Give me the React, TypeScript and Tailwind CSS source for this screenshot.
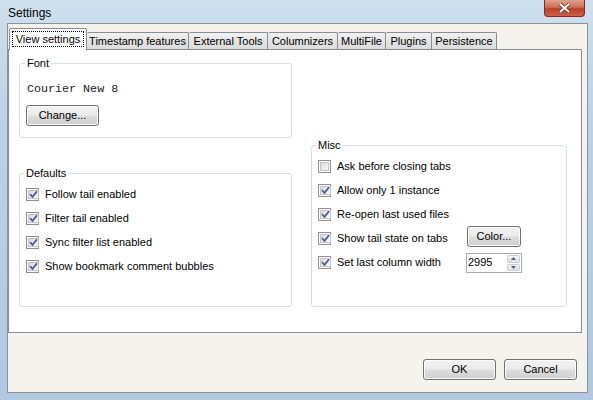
import React from "react";

const btn =
  "h-[21px] rounded-[3px] border border-[#707070] bg-[linear-gradient(to_bottom,#f2f2f2_0%,#ebebeb_48%,#dddddd_52%,#cfcfcf_100%)] text-[11px] text-black shadow-[inset_0_0_0_1px_#fcfcfc]";

function Check({ checked }: { checked: boolean }) {
  return (
    <span className="w-[13px] h-[13px] border border-[#8e8f8f] bg-white p-[1px] shrink-0 flex">
      <span className="flex-1 bg-[linear-gradient(135deg,#dcdcdc,#f8f8f8)] border border-[#c4c4c4] flex items-center justify-center">
        {checked && (
          <svg width="9" height="9" viewBox="0 0 9 9">
            <path d="M1 4.2 L3.5 6.8 L8 1.2" stroke="#4a5f97" strokeWidth="1.8" fill="none" />
          </svg>
        )}
      </span>
    </span>
  );
}

function Row({ label, checked }: { label: string; checked: boolean }) {
  return (
    <div className="flex items-center gap-[6px] h-[13px]">
      <Check checked={checked} />
      <span className="leading-[13px] whitespace-nowrap">{label}</span>
    </div>
  );
}

function Box({ title, className, children }: { title: string; className: string; children?: React.ReactNode }) {
  return (
    <fieldset className={"border border-[#d5dfe5] rounded-[3px] " + className}>
      <legend className="-ml-[2px] px-[2px] leading-[13px]">{title}</legend>
      {children}
    </fieldset>
  );
}

const tabs = ["Timestamp features", "External Tools", "Columnizers", "MultiFile", "Plugins", "Persistence"];
const tabW = [102, 79, 70, 48, 46, 65];

export default function App() {
  return (
    <div
      className="w-[593px] h-[400px] flex flex-col bg-[linear-gradient(to_bottom,#cfe0ee,#bcd2e6_30%,#b0c9e0)] text-black text-[11px]"
      style={{ fontFamily: '"Liberation Sans", Arial, sans-serif' }}
    >
      <div className="h-[23px] flex items-start justify-between pl-[8px] pr-[8px]">
        <span className="text-[12px] mt-[6px] leading-[14px]">Settings</span>
        <span className="w-[41px] h-[17px] rounded-b-[4px] border border-t-0 border-[#7a2e1f] bg-[linear-gradient(to_bottom,#dfa08e,#cf6f57_45%,#bd3f25_55%,#c9634b)] flex items-center justify-center">
          <svg width="13" height="10" viewBox="0 0 13 10">
            <path d="M2 1 L11 9 M11 1 L2 9" stroke="#4a3530" strokeWidth="3.4" />
            <path d="M2 1 L11 9 M11 1 L2 9" stroke="#ffffff" strokeWidth="2" />
          </svg>
        </span>
      </div>
      <div className="flex-1 ml-[7px] mr-[5px] mb-[7px] border border-[#8d9196] bg-[#f4f3ee] flex flex-col">
        <div className="flex items-end h-[25px] pl-[1px]">
          <div className="w-[78px] h-[22px] -mb-[1px] bg-white border border-b-0 border-[#898c95] rounded-t-[2px] relative z-10 flex items-start justify-center pt-[2px]">
            <span className="border border-dotted border-black h-[16px] leading-[14px] w-[72px] text-center whitespace-nowrap">View settings</span>
          </div>
          {tabs.map((t, i) => (
            <div
              key={t}
              style={{ width: tabW[i] }}
              className="h-[17px] border border-b-0 border-l-0 border-[#898c95] rounded-t-[2px] bg-[linear-gradient(to_bottom,#f2f2f2,#e4e4e4_50%,#dcdcdc)] flex items-center justify-center leading-[16px] whitespace-nowrap"
            >
              {t}
            </div>
          ))}
        </div>
        <div className="w-[574px] h-[284px] bg-white border border-[#898c95] flex gap-[19px] pl-[10px]">
          <div className="w-[273px] flex flex-col">
            <Box title="Font" className="mt-[7px] h-[81px] px-[7px]">
              <div className="mt-[13px] text-[11.7px] leading-[12px] text-[#222]" style={{ fontFamily: '"Liberation Mono", "Courier New", monospace' }}>
                Courier New 8
              </div>
              <button className={btn + " w-[73px] mt-[10px] -ml-[1px]"}>Change...</button>
            </Box>
            <Box title="Defaults" className="mt-[29px] h-[140px] px-[6px]">
              <div className="flex flex-col gap-[11px] mt-[8px]">
                <Row label="Follow tail enabled" checked />
                <Row label="Filter tail enabled" checked />
                <Row label="Sync filter list enabled" checked />
                <Row label="Show bookmark comment bubbles" checked />
              </div>
            </Box>
          </div>
          <Box title="Misc" className="mt-[89px] w-[256px] h-[168px] px-[6px]">
            <div className="flex flex-col gap-[11px] mt-[8px]">
              <Row label="Ask before closing tabs" checked={false} />
              <Row label="Allow only 1 instance" checked />
              <Row label="Re-open last used files" checked />
              <div className="flex items-center h-[13px]">
                <div className="w-[149px]">
                  <Row label="Show tail state on tabs" checked />
                </div>
                <button className={btn + " w-[54px] h-[20px] shrink-0 -mt-[4px]"}>Color...</button>
              </div>
              <div className="flex items-center h-[13px]">
                <div className="w-[148px]">
                  <Row label="Set last column width" checked />
                </div>
                <div className="w-[56px] h-[20px] shrink-0 -mb-[1px] border border-[#a5acb5] flex items-stretch">
                  <span className="flex-1 pl-[1px] leading-[17px]">2995</span>
                  <span className="w-[15px] flex flex-col p-[1px] gap-[1px]">
                    <span className="flex-1 border border-[#c8ccd1] rounded-[2px] bg-[linear-gradient(#f4f4f4,#e0e0e0)] flex items-center justify-center">
                      <svg width="5" height="3" viewBox="0 0 5 3"><path d="M0 3 L2.5 0 L5 3Z" fill="#4d6185" /></svg>
                    </span>
                    <span className="flex-1 border border-[#c8ccd1] rounded-[2px] bg-[linear-gradient(#f4f4f4,#e0e0e0)] flex items-center justify-center">
                      <svg width="5" height="3" viewBox="0 0 5 3"><path d="M0 0 L2.5 3 L5 0Z" fill="#4d6185" /></svg>
                    </span>
                  </span>
                </div>
              </div>
            </div>
          </Box>
        </div>
        <div className="flex justify-end gap-[8px] mt-[26px] pr-[10px]">
          <button className={btn + " w-[73px] border-[#3c7fb1] shadow-[inset_0_0_0_1px_#bfe6f9]"}>OK</button>
          <button className={btn + " w-[73px]"}>Cancel</button>
        </div>
      </div>
    </div>
  );
}
